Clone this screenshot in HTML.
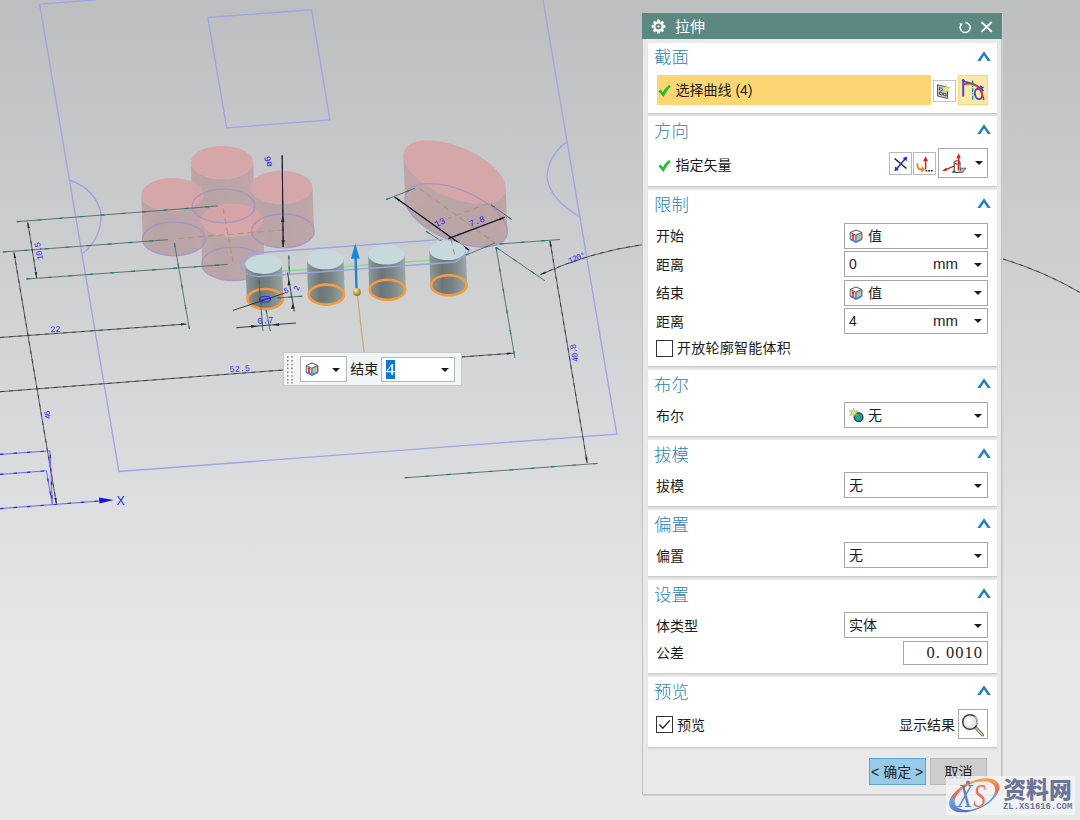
<!DOCTYPE html>
<html lang="zh-CN">
<head>
<meta charset="utf-8">
<title>拉伸</title>
<style>
*{box-sizing:border-box;margin:0;padding:0}
html,body{width:1080px;height:820px;overflow:hidden}
body{position:relative;font-family:"Liberation Sans","Noto Sans CJK SC",sans-serif;font-size:14px;color:#1c1c1c;
 background:linear-gradient(180deg,#bdbec0 0px,#e7e8ea 665px,#e7e8ea 820px)}
#cad{position:absolute;left:0;top:0;width:1080px;height:820px}
.abs{position:absolute}
/* dialog */
#dlg{position:absolute;left:642px;top:13px;width:360px;height:782px;background:#e9e9e9;border:1px solid #c2c2c2;border-top:none;box-shadow:1px 1px 0 #cfcfcf}
#ttl{position:absolute;left:642px;top:13px;width:360px;height:26px;background:#5c8882;color:#fff}
#ttl .t{position:absolute;left:33px;top:3px;font-size:15px;line-height:22px;color:#fff}
.pn{position:absolute;left:648px;width:349px;background:#fff;box-shadow:0 1px 0 #cbcbcb,0 2px 1.5px rgba(0,0,0,.07)}
.hd{position:absolute;left:6px;top:1.8px;font-size:17.4px;line-height:26px;color:#2f7fb2;font-weight:300}
.cv{position:absolute;left:328px;top:7px;width:16px;height:12px}
.lb{position:absolute;left:8px;font-size:14px;line-height:20px;color:#1c1c1c;white-space:nowrap}
.dd{position:absolute;left:196px;width:144px;height:26px;border:1px solid #a6a6a6;background:#fff}
.dd .tx{position:absolute;top:2px;font-size:14px;line-height:20px;white-space:nowrap}
.dd .ar{position:absolute;left:129px;top:10.5px;width:0;height:0;border-left:4px solid transparent;border-right:4px solid transparent;border-top:4px solid #1a1a1a}
.ib{position:absolute;border:1px solid #b9b9b9;background:#fff}
.cb{position:absolute;left:8px;width:17px;height:17px;border:1px solid #333;background:#fff}
</style>
</head>
<body>
<!--CAD-->
<svg id="cad" viewBox="0 0 1080 820" width="1080" height="820">
<defs>
<linearGradient id="gcyl" x1="0" y1="0" x2="1" y2="0"><stop offset="0" stop-color="#8f9a9a"/><stop offset=".35" stop-color="#6c7676"/><stop offset=".62" stop-color="#788383"/><stop offset="1" stop-color="#9ba7a8"/></linearGradient>
<linearGradient id="pside" x1="0" y1="0" x2="1" y2="0"><stop offset="0" stop-color="#bda3a4"/><stop offset=".3" stop-color="#b6a0a2"/><stop offset=".7" stop-color="#b9a1a3"/><stop offset="1" stop-color="#c0a2a4"/></linearGradient>
<radialGradient id="ball" cx=".35" cy=".3" r=".8"><stop offset="0" stop-color="#f3e6b0"/><stop offset=".5" stop-color="#c9a64e"/><stop offset="1" stop-color="#7d6424"/></radialGradient>
<marker id="ah" viewBox="0 0 8 4" refX="8" refY="2" markerWidth="7" markerHeight="3.2" orient="auto-start-reverse"><path d="M0 0.4 L8 2 L0 3.6 Z" fill="#1d2a2c"/></marker>
<linearGradient id="pside2" x1="0" y1="0" x2="1" y2="0"><stop offset="0" stop-color="#bfa4a5"/><stop offset=".6" stop-color="#b7a0a2"/><stop offset="1" stop-color="#c0a0a2"/></linearGradient>
</defs>
<g fill="none" stroke="#9ea6e8" stroke-width="1.4" stroke-linejoin="round">
<path d="M96 -0.2 L39.6 4.1 L118.9 471.5 L616.8 434.1 L543 0"/>
<path d="M207.8 17.5 L311.5 9.7 L329.9 119.9 L226.7 127.9 Z"/>
<path d="M69.5 180 Q97 190 101 214 Q102 238 82.2 254"/>
<path d="M566.8 141.9 Q548.5 155 547 176.5 Q549 199 579.4 216.5"/>
</g>
<g opacity=".9"><path d="M190.8 162.4 L192.3 205.9 A31.2 16.5 0 0 0 254.7 205.9 L253.2 162.4 A31.2 16.5 0 0 1 190.8 162.4 Z" fill="url(#pside)"/><ellipse cx="222" cy="162.4" rx="31.2" ry="16.5" fill="#d8a4a6"/></g>
<g opacity=".9"><path d="M141.3 194.6 L142.70000000000002 239 A31.2 16.5 0 0 0 205.1 239 L203.7 194.6 A31.2 16.5 0 0 1 141.3 194.6 Z" fill="url(#pside)"/><ellipse cx="172.5" cy="194.6" rx="31.2" ry="16.5" fill="#d8a4a6"/></g>
<g opacity=".9"><path d="M250.0 187.2 L251.7 231 A31.2 16.5 0 0 0 314.09999999999997 231 L312.4 187.2 A31.2 16.5 0 0 1 250.0 187.2 Z" fill="url(#pside)"/><ellipse cx="281.2" cy="187.2" rx="31.2" ry="16.5" fill="#d8a4a6"/></g>
<g opacity=".9"><path d="M200.8 220 L202.0 263.9 A31.2 16.5 0 0 0 264.4 263.9 L263.2 220 A31.2 16.5 0 0 1 200.8 220 Z" fill="url(#pside)"/><ellipse cx="232" cy="220" rx="31.2" ry="16.5" fill="#d8a4a6"/></g>
<ellipse cx="223.5" cy="205.9" rx="31.4" ry="16.8" fill="none" stroke="#a090cc" stroke-width="1.3" stroke-opacity=".85"/>
<ellipse cx="173.9" cy="239" rx="31.4" ry="16.8" fill="none" stroke="#a090cc" stroke-width="1.3" stroke-opacity=".85"/>
<ellipse cx="282.9" cy="231" rx="31.4" ry="16.8" fill="none" stroke="#a090cc" stroke-width="1.3" stroke-opacity=".85"/>
<ellipse cx="233.2" cy="263.9" rx="31.4" ry="16.8" fill="none" stroke="#a090cc" stroke-width="1.3" stroke-opacity=".85"/>
<g opacity=".9">
<ellipse cx="456.2" cy="215.3" rx="54.5" ry="25.5" transform="rotate(23 456.2 215.3)" fill="#b9a1a3"/>
<path d="M403.4 155.7 L405.1 199.0 L507.3 231.6 L505.7 188.3 Z" fill="url(#pside2)"/>
<ellipse cx="454.55" cy="172" rx="54.5" ry="25.5" transform="rotate(23 454.55 172)" fill="#d8a4a6"/>
</g>
<ellipse cx="456.2" cy="215.3" rx="54.5" ry="25.5" transform="rotate(23 456.2 215.3)" fill="none" stroke="#a090cc" stroke-width="1.3" stroke-opacity=".85"/>
<g fill="none" stroke="#b5927a" stroke-width="1.1" stroke-dasharray="6 4">
<path d="M223 208 L233 262"/>
<path d="M178 238.5 L283 230"/>
<path d="M419 188.3 L495 243"/>
<path d="M426.8 226.3 L489.3 203"/>
</g>
<g fill="none" stroke="#566668" stroke-width=".9">
<path d="M16.7 221.7 L218 206"/>
<path d="M2.8 252 L168 239.7"/>
<path d="M26.4 279 L227.8 264.4"/>
<path d="M174.4 243 L189.4 329"/>
<path d="M499.5 244 L560 239.5"/>
<path d="M404.6 477.8 L597.8 463.4"/>
<path d="M496 247.3 L545 280.8"/>
<path d="M496 247.3 L514.9 358"/>
<path d="M385.9 199.6 L415 188.3"/>
<path d="M425.9 231.2 L447.3 244.9"/>
<path d="M491.2 204.9 L511.7 219.5"/>
<path d="M464.9 255.6 L495 243"/>
</g>
<g fill="none" stroke="#0f7d78" stroke-width="1.1" stroke-dasharray="4 17">
<path d="M16.7 221.7 L218 206"/>
<path d="M2.8 252 L168 239.7"/>
<path d="M26.4 279 L227.8 264.4"/>
<path d="M174.4 243 L189.4 329"/>
<path d="M499.5 244 L560 239.5"/>
<path d="M404.6 477.8 L597.8 463.4"/>
<path d="M496 247.3 L545 280.8"/>
<path d="M496 247.3 L514.9 358"/>
<path d="M385.9 199.6 L415 188.3"/>
<path d="M425.9 231.2 L447.3 244.9"/>
<path d="M491.2 204.9 L511.7 219.5"/>
<path d="M464.9 255.6 L495 243"/>
</g>
<g fill="none" stroke="#4a5254" stroke-width=".9">
<path d="M27.8 222.5 L36.7 277.8" marker-end="url(#ah)" marker-start="url(#ah)"/>
<path d="M14 252.5 L56.4 503.6" marker-end="url(#ah)" marker-start="url(#ah)"/>
<path d="M0 337.5 L186.7 324" marker-end="url(#ah)"/>
<path d="M0 391.7 L283 370"/>
<path d="M461 357 L513 353.2" marker-end="url(#ah)"/>
<path d="M550 241 L587.2 463" marker-end="url(#ah)" marker-start="url(#ah)"/>
<path d="M282.2 155.4 L283.2 247"/>
<path d="M394.6 197 L469.8 250.7" marker-end="url(#ah)" marker-start="url(#ah)"/>
<path d="M448.3 238.6 L504.9 217.2" marker-end="url(#ah)"/>
<path d="M540.5 274.6 Q590 252 643 244.6" marker-start="url(#ah)"/>
<path d="M1002 258.6 Q1045 272 1080 292.5"/>
</g>
<g fill="none" stroke="#181c2a" stroke-width="1.2"><path d="M394.6 197 L469.8 250.7"/><path d="M448.3 238.6 L504.9 217.2"/><path d="M282.2 155.4 L283.2 247" stroke-width="1"/></g>
<g fill="none" stroke="#1c2230" stroke-width="1" stroke-opacity=".6" stroke-dasharray="4 5">
<path d="M27.8 222.5 L36.7 277.8"/>
<path d="M14 252.5 L56.4 503.6"/>
<path d="M0 337.5 L186.7 324"/>
<path d="M0 391.7 L283 370"/>
<path d="M461 357 L513 353.2"/>
<path d="M550 241 L587.2 463"/>
<path d="M282.2 155.4 L283.2 247"/>
<path d="M394.6 197 L469.8 250.7"/>
<path d="M448.3 238.6 L504.9 217.2"/>
<path d="M540.5 274.6 Q590 252 643 244.6"/><path d="M1002 258.6 Q1045 272 1080 292.5"/>
</g>
<g fill="#1d2a2c">
<path d="M282.8 215 L284.4 222 L281.2 222 Z"/><path d="M283.2 247 L281.5 240 L284.8 240 Z"/>
</g>
<g fill="none" stroke="#6a6af3" stroke-width="1">
<path d="M0 454.4 L50 450.8 L52.3 504.4"/>
<path d="M0 474.4 L46.4 470.8 L52.3 504.4"/>
<path d="M0 508.6 L100 501"/>
</g>
<g fill="none" stroke="#2a2aee" stroke-width="1.2" stroke-dasharray="3.5 10">
<path d="M0 454.4 L50 450.8 L52.3 504.4"/>
<path d="M0 474.4 L46.4 470.8 L52.3 504.4"/>
<path d="M0 508.6 L100 501"/>
</g>
<path d="M113.6 500 L99 497.6 L99.4 503.6 Z" fill="#1414de"/>
<text x="116.5" y="505" font-family="Liberation Sans,sans-serif" font-size="12.5" fill="#2a2af0">X</text>
<path d="M282.3 271.3 L430 260.3" stroke="#84e07e" stroke-width="1.4" fill="none"/>
<path d="M245.3 264.2 L246.89999999999998 299 A18.3 10.299999999999999 0 0 0 283.5 299 L281.90000000000003 264.2 Z" fill="url(#gcyl)"/><ellipse cx="263.6" cy="264.2" rx="18.3" ry="9.7" fill="#c6dadd"/><ellipse cx="265.2" cy="299" rx="17.7" ry="10.0" fill="none" stroke="#f59b3e" stroke-width="2.6"/>
<path d="M307.0 259.6 L308.09999999999997 294.6 A18.3 10.299999999999999 0 0 0 344.7 294.6 L343.6 259.6 Z" fill="url(#gcyl)"/><ellipse cx="325.3" cy="259.6" rx="18.3" ry="9.7" fill="#c6dadd"/><ellipse cx="326.4" cy="294.6" rx="17.7" ry="10.0" fill="none" stroke="#f59b3e" stroke-width="2.6"/>
<path d="M368.09999999999997 254.8 L369.2 289.8 A18.3 10.299999999999999 0 0 0 405.8 289.8 L404.7 254.8 Z" fill="url(#gcyl)"/><ellipse cx="386.4" cy="254.8" rx="18.3" ry="9.7" fill="#c6dadd"/><ellipse cx="387.5" cy="289.8" rx="17.7" ry="10.0" fill="none" stroke="#f59b3e" stroke-width="2.6"/>
<path d="M429.2 250.4 L430.5 285.2 A18.3 10.299999999999999 0 0 0 467.1 285.2 L465.8 250.4 Z" fill="url(#gcyl)"/><ellipse cx="447.5" cy="250.4" rx="18.3" ry="9.7" fill="#c6dadd"/><ellipse cx="448.8" cy="285.2" rx="17.7" ry="10.0" fill="none" stroke="#f59b3e" stroke-width="2.6"/>
<path d="M254.4 253 Q241 256 240.8 264.5 Q242 275 258.3 276.5 L455.3 262 L468.2 252.2 L470.2 249 M254.4 253 L443 239.3" fill="none" stroke="#9da3e4" stroke-width="1.3"/>
<path d="M246 262.5 Q247 257.5 256 256" fill="none" stroke="#b9c0ee" stroke-width="1"/>
<path d="M451 239 L455 256.6" fill="none" stroke="#b5927a" stroke-width="1.1" stroke-dasharray="6 4"/>
<g fill="none" stroke="#566668" stroke-width=".9">
<path d="M288.8 255.7 L289.4 273.9"/>
<path d="M277.8 297.9 L302.4 296.2"/>
<path d="M259 280.4 L262.9 331"/>
<path d="M266 310 L270.3 331"/>
</g>
<g fill="none" stroke="#0f7d78" stroke-width="1.1" stroke-dasharray="3.5 7">
<path d="M288.8 255.7 L289.4 273.9"/>
<path d="M277.8 297.9 L302.4 296.2"/>
<path d="M259 280.4 L262.9 331"/>
<path d="M266 310 L270.3 331"/>
</g>
<g fill="none" stroke="#2a3034" stroke-width=".9">
<path d="M287.5 272.6 L294.4 311.5"/>
<path d="M233 310.4 L285 293"/>
<path d="M236.3 327.7 L296 323"/>
</g>
<g fill="#1d2a2c">
<path d="M288.6 279 L290.6 285 L287.6 285.4 Z"/><path d="M293 303 L291 309 L294.6 308.6 Z"/>
<path d="M258 326 L251 325 L251.4 328 Z"/><path d="M272 325 L279 323 L279.2 326 Z"/>
</g>
<ellipse cx="265" cy="299.2" rx="5.5" ry="3" fill="none" stroke="#2626ee" stroke-width="1.1"/>
<path d="M259 300.5 L271 298" stroke="#2626ee" stroke-width="1"/>
<path d="M357 292 L364 352" stroke="#c9a55a" stroke-width="1.1" fill="none"/>
<path d="M356.5 288 L355.6 257" stroke="#1c86dc" stroke-width="2.4" fill="none"/>
<path d="M355.2 243.2 L359.7 258.6 L351 258.8 Z" fill="#1c86dc"/>
<circle cx="356.9" cy="292" r="3.9" fill="url(#ball)"/>
<text x="41.5" y="251" transform="rotate(-100 41.5 251)" font-family="Liberation Mono,monospace" font-size="8.5" fill="#2a2af0" letter-spacing="-0.8" text-anchor="middle">10.5</text>
<text x="55.6" y="332" transform="rotate(-4 55.6 332)" font-family="Liberation Mono,monospace" font-size="8.5" fill="#2a2af0" text-anchor="middle">22</text>
<text x="240" y="371.5" transform="rotate(-4 240 371.5)" font-family="Liberation Mono,monospace" font-size="8.5" fill="#2a2af0" text-anchor="middle">52.5</text>
<text x="50" y="415" transform="rotate(-100 50 415)" font-family="Liberation Mono,monospace" font-size="8" fill="#2a2af0" letter-spacing="-1" text-anchor="middle">46</text>
<text x="577" y="353" transform="rotate(-100 577 353)" font-family="Liberation Mono,monospace" font-size="8.5" fill="#2a2af0" letter-spacing="-0.8" text-anchor="middle">40.8</text>
<text x="577.5" y="260.5" transform="rotate(-22 577.5 260.5)" font-family="Liberation Mono,monospace" font-size="8.5" fill="#2a2af0" letter-spacing="-0.8" text-anchor="middle">120°</text>
<text x="441" y="225" transform="rotate(-25 441 225)" font-family="Liberation Mono,monospace" font-size="9" fill="#2a2af0" text-anchor="middle">13</text>
<text x="478" y="224" transform="rotate(-22 478 224)" font-family="Liberation Mono,monospace" font-size="9" fill="#2a2af0" text-anchor="middle">7.8</text>
<text x="271" y="161" transform="rotate(-100 271 161)" font-family="Liberation Mono,monospace" font-size="9" fill="#2a2af0" text-anchor="middle">ø6</text>
<text x="265.5" y="323.5" transform="rotate(-4 265.5 323.5)" font-family="Liberation Mono,monospace" font-size="9" fill="#2a2af0" text-anchor="middle">0.7</text>
<text x="299" y="289" transform="rotate(-70 299 289)" font-family="Liberation Mono,monospace" font-size="8" fill="#2a2af0" text-anchor="middle">2</text>
<text x="287" y="293" transform="rotate(-20 287 293)" font-family="Liberation Mono,monospace" font-size="8" fill="#2a2af0" text-anchor="middle">5</text>
</svg>
<!--/CAD-->

<!--DIALOG-->
<div id="dlg"></div>
<div id="ttl">
 <svg class="abs" style="left:9px;top:6px" width="15" height="15" viewBox="0 0 15 15"><g fill="#fff"><circle cx="7.5" cy="7.5" r="5.2"/><g id="tg"><rect x="6.1" y="0.6" width="2.8" height="13.8" rx=".6"/></g><rect x="6.1" y="0.6" width="2.8" height="13.8" rx=".6" transform="rotate(45 7.5 7.5)"/><rect x="6.1" y="0.6" width="2.8" height="13.8" rx=".6" transform="rotate(90 7.5 7.5)"/><rect x="6.1" y="0.6" width="2.8" height="13.8" rx=".6" transform="rotate(135 7.5 7.5)"/></g><circle cx="7.5" cy="7.5" r="3" fill="#5c8882"/><circle cx="7.5" cy="7.5" r="1.1" fill="#fff"/></svg>
 <span class="t">拉伸</span>
 <svg class="abs" style="left:316px;top:7px" width="14" height="14" viewBox="0 0 14 14"><path d="M3.1 4.6 A5 5 0 1 0 7 2.5" fill="none" stroke="#fff" stroke-width="1.5"/><path d="M1.6 3.2 L4.9 3.6 L2.6 6.6 Z" fill="#fff"/></svg>
 <svg class="abs" style="left:338px;top:8px" width="13" height="12" viewBox="0 0 13 12"><path d="M1.5 1 L11.8 10.8 M11.8 1 L1.5 10.8" stroke="#fff" stroke-width="1.8" fill="none"/></svg>
</div>
<!--PANELS-->
<!-- 截面 -->
<div class="pn" style="top:42.5px;height:70px">
 <div class="hd">截面</div>
 <svg class="cv" viewBox="0 0 16 12"><path d="M1.3 10.9 L8 1.2 L14.8 10.9 L11.7 10.9 L8 5.5 L4.4 10.9 Z" fill="#1f80b8"/></svg>
 <div class="abs" style="left:8.6px;top:32px;width:274.4px;height:30px;background:#fcd672"></div>
 <svg class="abs" style="left:9.6px;top:41.2px" width="14" height="13" viewBox="0 0 14 13"><path d="M1.4 6.4 L5.2 10.6 Q7.6 5 12 1.9" fill="none" stroke="#23bd30" stroke-width="2.7" stroke-linejoin="miter"/></svg>
 <div class="lb" style="left:27.5px;top:37px">选择曲线 (4)</div>
 <div class="ib" style="left:285.2px;top:37px;width:22.6px;height:22.5px;border-color:#c4c4c4">
  <svg class="abs" style="left:2.2px;top:2px" width="16" height="17" viewBox="0 0 16 17"><path d="M1.5 1.8 L11.5 4.2 L11.5 15.5 L1.5 13 Z" fill="#c9d6c9" stroke="#555" stroke-width="1"/><path d="M3.4 4.6 L6.2 5.3 L6.2 7.6 L3.4 6.9 Z M3.4 9 L6.2 9.7 L6.2 12 L3.4 11.3 Z M7.6 10 L10 10.6 L10 13 L7.6 12.4 Z" fill="#fff" stroke="#333" stroke-width=".9"/><path d="M10 1.2 L11 4.6 L14.6 3.8 L12 6.2 L13.4 9.4 L10.4 7.6 L7.6 9.8 L8.4 6.6 L5.6 4.6 L9 4.6 Z" fill="#f4ef3c" stroke="#9bbbe0" stroke-width=".5"/></svg>
 </div>
 <div class="abs" style="left:310px;top:32.5px;width:30px;height:30px;background:#fbeaa9;border:1px solid #fcd572">
  <svg class="abs" style="left:0;top:0" width="28" height="28" viewBox="0 0 28 28"><path d="M4.2 5.5 L4.2 20.5" stroke="#4a4ad8" stroke-width="2" fill="none"/><circle cx="4.2" cy="4.4" r="1.3" fill="#3a3ad6"/><path d="M4 5 L14 8 L20.5 11.5 L24.5 15" stroke="#3d3dd8" stroke-width="1.7" fill="none"/><path d="M21.5 9.5 L22.8 12.4 L24.6 11" stroke="#3d3dd8" stroke-width="1.5" fill="none"/><ellipse cx="19.5" cy="18" rx="3.6" ry="5.2" transform="rotate(-12 19.5 18)" fill="none" stroke="#3d3dd8" stroke-width="1.8"/><path d="M4.6 8.3 Q11 6.6 16.5 9 Q22.4 12 24.8 24" stroke="#e03a1e" stroke-width="1.9" fill="none"/><path d="M13.6 4.5 L13.6 25" stroke="#0f8a78" stroke-width="1.2" stroke-dasharray="4 1.2 1.2 1.2" fill="none"/></svg>
 </div>
</div>
<!-- 方向 -->
<div class="pn" style="top:116.3px;height:70.2px">
 <div class="hd">方向</div>
 <svg class="cv" viewBox="0 0 16 12"><path d="M1.3 10.9 L8 1.2 L14.8 10.9 L11.7 10.9 L8 5.5 L4.4 10.9 Z" fill="#1f80b8"/></svg>
 <svg class="abs" style="left:9.6px;top:42.7px" width="14" height="13" viewBox="0 0 14 13"><path d="M1.4 6.4 L5.2 10.6 Q7.6 5 12 1.9" fill="none" stroke="#23bd30" stroke-width="2.7" stroke-linejoin="miter"/></svg>
 <div class="lb" style="left:27.5px;top:38.5px">指定矢量</div>
 <div class="ib" style="left:241px;top:35.6px;width:22.5px;height:23px">
  <svg class="abs" style="left:0;top:0" width="21" height="21" viewBox="0 0 21 21"><path d="M4.6 5.6 L16.4 15.4" stroke="#111" stroke-width="1.3"/><path d="M6.5 16 L15 6" stroke="#1a2fe0" stroke-width="1.5"/><path d="M17.3 3.6 L16.6 8.2 L12.8 5 Z M4.4 18.2 L5.2 13.6 L9 16.8 Z" fill="#1a2fe0"/></svg>
 </div>
 <div class="ib" style="left:265.2px;top:35.6px;width:22.8px;height:23px">
  <svg class="abs" style="left:0;top:0" width="21" height="21" viewBox="0 0 21 21"><path d="M11.6 16.5 L11.6 7" stroke="#e0201a" stroke-width="1.5"/><path d="M11.6 3.2 L14 8 L9.2 8 Z" fill="#e0201a"/><path d="M4 10.5 Q3.6 15.6 8 16 L8 13.6 L10.6 16.6 L7.6 19 L8 17.4 Q2.6 17.6 2.8 10.8 Z" fill="#f08a1c" stroke="#e27a12" stroke-width=".6"/><path d="M11.6 17.8h1.7M14.3 17.8h1.7M17 17.8h1.7" stroke="#111" stroke-width="1.4"/></svg>
 </div>
 <div class="ib" style="left:290px;top:32px;width:50px;height:30px;border-color:#a9a9a9">
  <svg class="abs" style="left:2px;top:2px" width="30" height="26" viewBox="0 0 30 26"><path d="M11 21.5 L21.5 21.5 L25 17.2 L15 17.2 Z" fill="#b5b5b5" stroke="#555" stroke-width=".8"/><path d="M2.6 19.4 L13 15.2" stroke="#e0201a" stroke-width="1.4"/><path d="M1 20.2 L5.4 16.4 L6.4 19.6 Z" fill="#e0201a"/><path d="M13.2 11.4 L13.2 20.6 Q16 22.6 19 20.6 L19 11.4 Z" fill="#eef6ee" stroke="#222" stroke-width=".9"/><path d="M16.4 12 L19 11.4 L19 20.6 L16.4 21.6 Z" fill="#a9dba9"/><ellipse cx="16.1" cy="11.4" rx="2.9" ry="1.6" fill="#fff" stroke="#222" stroke-width=".9"/><path d="M17.6 19 L17.6 6.5" stroke="#e0201a" stroke-width="1.5"/><path d="M17.6 2.2 L19.9 7.2 L15.3 7.2 Z" fill="#e0201a"/></svg>
  <div class="abs" style="left:35.5px;top:11.8px;width:0;height:0;border-left:4px solid transparent;border-right:4px solid transparent;border-top:4px solid #1a1a1a"></div>
 </div>
</div>
<!-- 限制 -->
<div class="pn" style="top:190px;height:176px">
 <div class="hd">限制</div>
 <svg class="cv" viewBox="0 0 16 12"><path d="M1.3 10.9 L8 1.2 L14.8 10.9 L11.7 10.9 L8 5.5 L4.4 10.9 Z" fill="#1f80b8"/></svg>
 <div class="lb" style="top:36px">开始</div>
 <div class="dd" style="top:32.7px"><svg class="abs cube" style="left:3.7px;top:5px" width="14" height="14" viewBox="0 0 14 14"><use href="#cubeI"/></svg><span class="tx" style="left:23px">值</span><i class="ar"></i></div>
 <div class="lb" style="top:64.5px">距离</div>
 <div class="dd" style="top:61.1px"><span class="tx" style="left:4px">0</span><span class="tx" style="left:88px;font-size:15px">mm</span><i class="ar"></i></div>
 <div class="lb" style="top:93px">结束</div>
 <div class="dd" style="top:89.5px"><svg class="abs cube" style="left:3.7px;top:5px" width="14" height="14" viewBox="0 0 14 14"><use href="#cubeI"/></svg><span class="tx" style="left:23px">值</span><i class="ar"></i></div>
 <div class="lb" style="top:121.5px">距离</div>
 <div class="dd" style="top:117.9px"><span class="tx" style="left:4px">4</span><span class="tx" style="left:88px;font-size:15px">mm</span><i class="ar"></i></div>
 <div class="cb" style="top:149.5px"></div>
 <div class="lb" style="left:29px;top:148px;letter-spacing:.25px">开放轮廓智能体积</div>
</div>
<!-- 布尔 -->
<div class="pn" style="top:370.3px;height:66px">
 <div class="hd">布尔</div>
 <svg class="cv" viewBox="0 0 16 12"><path d="M1.3 10.9 L8 1.2 L14.8 10.9 L11.7 10.9 L8 5.5 L4.4 10.9 Z" fill="#1f80b8"/></svg>
 <div class="lb" style="top:35.5px">布尔</div>
 <div class="dd" style="top:32.2px"><svg class="abs" style="left:3px;top:4px" width="17" height="17" viewBox="0 0 17 17"><circle cx="10.6" cy="10.2" r="4.3" fill="#21a596" stroke="#13302e" stroke-width="1.2"/><path d="M5.6 1.2 L6.5 4.2 L9.6 3.4 L7.6 5.8 L10 8 L6.8 7.6 L5.8 10.6 L4.9 7.6 L1.6 8.4 L3.8 6 L1.4 3.8 L4.6 4.2 Z" fill="#f2f028" stroke="#5a90c8" stroke-width=".5"/></svg><span class="tx" style="left:23px">无</span><i class="ar"></i></div>
</div>
<!-- 拔模 -->
<div class="pn" style="top:440.3px;height:66px">
 <div class="hd">拔模</div>
 <svg class="cv" viewBox="0 0 16 12"><path d="M1.3 10.9 L8 1.2 L14.8 10.9 L11.7 10.9 L8 5.5 L4.4 10.9 Z" fill="#1f80b8"/></svg>
 <div class="lb" style="top:35.5px">拔模</div>
 <div class="dd" style="top:32.2px"><span class="tx" style="left:4px">无</span><i class="ar"></i></div>
</div>
<!-- 偏置 -->
<div class="pn" style="top:510.3px;height:66px">
 <div class="hd">偏置</div>
 <svg class="cv" viewBox="0 0 16 12"><path d="M1.3 10.9 L8 1.2 L14.8 10.9 L11.7 10.9 L8 5.5 L4.4 10.9 Z" fill="#1f80b8"/></svg>
 <div class="lb" style="top:35.5px">偏置</div>
 <div class="dd" style="top:32.2px"><span class="tx" style="left:4px">无</span><i class="ar"></i></div>
</div>
<!-- 设置 -->
<div class="pn" style="top:580.3px;height:92.4px">
 <div class="hd">设置</div>
 <svg class="cv" viewBox="0 0 16 12"><path d="M1.3 10.9 L8 1.2 L14.8 10.9 L11.7 10.9 L8 5.5 L4.4 10.9 Z" fill="#1f80b8"/></svg>
 <div class="lb" style="top:35.5px">体类型</div>
 <div class="dd" style="top:32.2px"><span class="tx" style="left:4px">实体</span><i class="ar"></i></div>
 <div class="lb" style="top:63px">公差</div>
 <div class="abs" style="left:255px;top:61px;width:85px;height:24px;border:1px solid #a6a6a6;background:#fff"><span class="abs" style="right:4px;top:1px;font-family:'Liberation Serif','Noto Serif CJK SC',serif;font-size:16.5px;letter-spacing:1px;line-height:20px;white-space:pre;color:#222">0. 0010</span></div>
</div>
<!-- 预览 -->
<div class="pn" style="top:677px;height:69.6px">
 <div class="hd">预览</div>
 <svg class="cv" viewBox="0 0 16 12"><path d="M1.3 10.9 L8 1.2 L14.8 10.9 L11.7 10.9 L8 5.5 L4.4 10.9 Z" fill="#1f80b8"/></svg>
 <div class="cb" style="top:39.3px"><svg class="abs" style="left:1px;top:1px" width="13" height="13" viewBox="0 0 13 13"><path d="M1.4 6.6 L4.8 10.2 L11.8 2.4" fill="none" stroke="#222" stroke-width="1.4"/></svg></div>
 <div class="lb" style="left:29px;top:38px">预览</div>
 <div class="lb" style="left:251px;top:38px">显示结果</div>
 <div class="ib" style="left:310px;top:32px;width:30px;height:30px;border-color:#a9a9a9">
  <svg class="abs" style="left:0;top:0" width="28" height="28" viewBox="0 0 28 28"><defs><radialGradient id="lens" cx=".4" cy=".4" r=".7"><stop offset="0" stop-color="#fff"/><stop offset="1" stop-color="#d4d6da"/></radialGradient></defs><path d="M16.5 17.5 L23.6 24.8" stroke="#7a7a70" stroke-width="3.2" stroke-linecap="round"/><path d="M16.8 17.8 L23.4 24.6" stroke="#d8d0a0" stroke-width="1.2" stroke-linecap="round"/><circle cx="11" cy="12" r="7.3" fill="url(#lens)" stroke="#3c3c3c" stroke-width="1.5"/><path d="M15.5 6.5 A7.3 7.3 0 0 1 17.6 15" fill="none" stroke="#aebfe6" stroke-width="1.5"/></svg>
 </div>
</div>
<!-- buttons -->
<div class="abs" style="left:868.7px;top:758.3px;width:57px;height:26.5px;background:#99cbe8;border:1px solid #55a6dc;font-size:14px;line-height:27px;text-align:center;white-space:nowrap;color:#222">&lt; 确定 &gt;</div>
<div class="abs" style="left:930px;top:758.3px;width:57px;height:26.5px;background:#cdcdcf;border:1px solid #b8b8b8;font-size:14px;line-height:27px;text-align:center;color:#222">取消</div>
<svg width="0" height="0" style="position:absolute"><defs>
 <g id="cubeI"><path d="M1.2 3.6 L7 1 L12.8 3.6 L12.8 10.2 L7 13 L1.2 10.2 Z" fill="#dfe3e6" stroke="#555" stroke-width=".9"/><path d="M1.2 3.6 L7 6.2 L12.8 3.6 L7 1 Z" fill="#f6f7f8" stroke="#555" stroke-width=".8"/><path d="M7 6.2 L7 13" stroke="#555" stroke-width=".8"/><path d="M7 6.2 L12.8 3.6 L12.8 10.2 L7 13 Z" fill="#b9bdc2" stroke="#555" stroke-width=".8"/><path d="M1.2 10.2 L7 13 L12.8 10.2" fill="none" stroke="#4c82da" stroke-width="1.6"/><path d="M4 11 L4 6.6" stroke="#e0201a" stroke-width="1.5"/><path d="M4 4.6 L5.6 7.2 L2.4 7.2 Z" fill="#e0201a"/></g>
</defs></svg>
<!--/PANELS-->
<!--/DIALOG-->
<!--TOOLBAR-->
<div class="abs" style="left:283.3px;top:352.4px;width:178.6px;height:33.4px;background:#f1f5f6;border:1px solid #c6c8c9">
 <svg class="abs" style="left:2px;top:2px" width="8" height="29" viewBox="0 0 8 29"><g fill="#80858a"><rect x="1" y="1.2" width="1.5" height="1.5"/><rect x="5.2" y="1.2" width="1.5" height="1.5"/><rect x="1" y="5" width="1.5" height="1.5"/><rect x="5.2" y="5" width="1.5" height="1.5"/><rect x="1" y="8.8" width="1.5" height="1.5"/><rect x="5.2" y="8.8" width="1.5" height="1.5"/><rect x="1" y="12.6" width="1.5" height="1.5"/><rect x="5.2" y="12.6" width="1.5" height="1.5"/><rect x="1" y="16.4" width="1.5" height="1.5"/><rect x="5.2" y="16.4" width="1.5" height="1.5"/><rect x="1" y="20.2" width="1.5" height="1.5"/><rect x="5.2" y="20.2" width="1.5" height="1.5"/><rect x="1" y="24" width="1.5" height="1.5"/><rect x="5.2" y="24" width="1.5" height="1.5"/><rect x="1" y="27.2" width="1.5" height="1.2"/><rect x="5.2" y="27.2" width="1.5" height="1.2"/></g></svg>
 <div class="abs" style="left:16px;top:3px;width:46.5px;height:26px;background:#fff;border:1px solid #b4b6b8">
  <svg class="abs" style="left:3.7px;top:5px" width="14" height="14" viewBox="0 0 14 14"><use href="#cubeI"/></svg>
  <div class="abs" style="left:31px;top:10.5px;width:0;height:0;border-left:4px solid transparent;border-right:4px solid transparent;border-top:4px solid #1a1a1a"></div>
 </div>
 <div class="abs" style="left:66px;top:5.5px;font-size:14px;line-height:20px;color:#1c1c1c;white-space:nowrap">结束</div>
 <div class="abs" style="left:96.7px;top:3.6px;width:74px;height:24.6px;background:#fff;border:1px solid #b4b6b8">
  <span class="abs" style="left:3.6px;top:1.8px;width:9.4px;height:19px;background:#0a78d6;color:#fff;font-family:'Liberation Serif','Noto Serif CJK SC',serif;font-size:17px;line-height:19px;text-align:center">4</span>
  <div class="abs" style="left:59px;top:10px;width:0;height:0;border-left:4px solid transparent;border-right:4px solid transparent;border-top:4px solid #1a1a1a"></div>
 </div>
</div>
<!--WATERMARK-->
<div class="abs" style="left:945.8px;top:775.8px;width:129px;height:39px;background:rgba(244,244,245,.8)"></div>
<svg class="abs" style="left:944px;top:774px" width="64" height="42" viewBox="0 0 64 42">
 <defs><linearGradient id="wg" x1=".15" y1="1" x2=".85" y2="0"><stop offset="0" stop-color="#4668b6"/><stop offset=".42" stop-color="#6fa4e6"/><stop offset=".56" stop-color="#ee6650"/><stop offset="1" stop-color="#f6b64e"/></linearGradient></defs>
 <g transform="rotate(-25 30.3 21.3)"><path fill-rule="evenodd" fill="url(#wg)" d="M3.3 21.3 a27 14 0 1 0 54 0 a27 14 0 1 0 -54 0 Z M9.2 21.9 a21.6 12.3 0 1 0 43.2 0 a21.6 12.3 0 1 0 -43.2 0 Z"/></g>
 <circle cx="24" cy="8.4" r="2" fill="#5f86c8"/>
 <text transform="translate(13.6 33) scale(.74 1)" font-family="Liberation Serif,serif" font-style="italic" font-size="33" fill="#5c80bf">X</text>
 <text transform="translate(29.6 33) scale(.74 1)" font-family="Liberation Serif,serif" font-style="italic" font-size="33" fill="#e8705a">S</text>
</svg>
<div class="abs" style="left:1003.3px;top:772.6px;font-family:'Noto Sans CJK SC','Liberation Sans',sans-serif;font-weight:900;font-size:22.8px;line-height:32px;color:#6c7597;white-space:nowrap">资料网</div>
<div class="abs" style="left:1003px;top:801.6px;font-family:'Liberation Mono',monospace;font-weight:bold;font-size:8.9px;line-height:11px;color:#6c7597;white-space:nowrap">ZL.XS1616.COM</div>
</body>
</html>
